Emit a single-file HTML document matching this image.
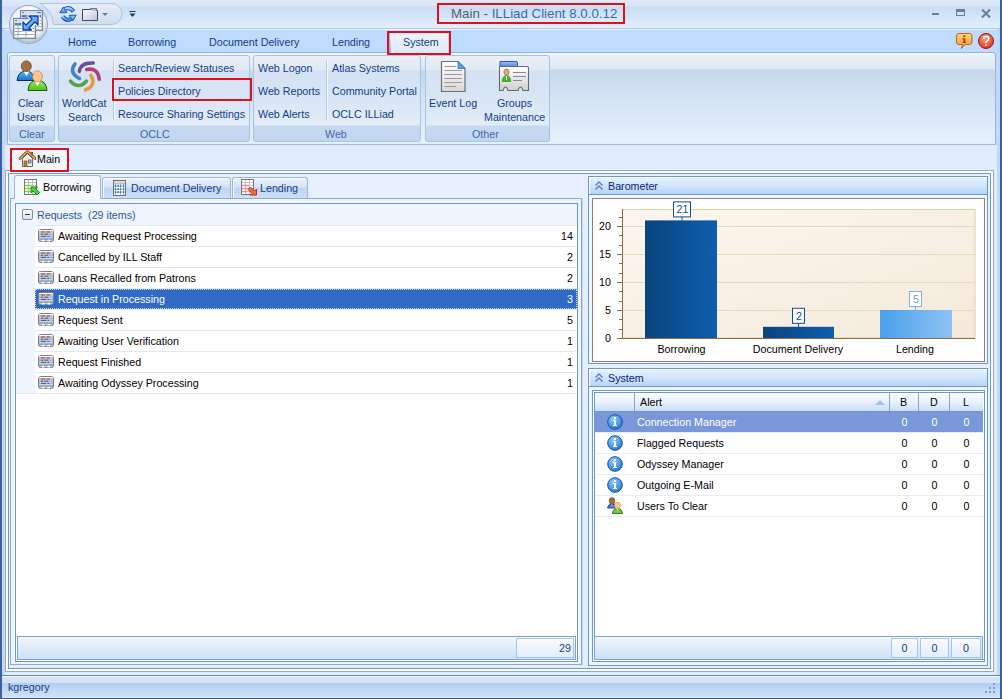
<!DOCTYPE html>
<html><head><meta charset="utf-8"><style>
*{box-sizing:border-box;margin:0;padding:0}
html,body{width:1002px;height:699px;overflow:hidden}
body{position:relative;font-family:"Liberation Sans",sans-serif;font-size:10.7px;color:#000;background:#c5d9f1}
.a{position:absolute}
.t{position:absolute;white-space:nowrap;line-height:13px}
.b{color:#123e87}
.gl{color:#3e6aaa}
.grp{border:1px solid #a9c3e3;border-radius:3px;background:linear-gradient(#e9f0f9 0px,#e0e9f5 14px,#d3e1f3 15px,#dae6f6 45px,#e3edf9 69px,#c5daf2 70px,#c1d7f0 85px)}
</style></head><body>
<div class="a" style="left:0px;top:0px;width:1002px;height:28px;background:linear-gradient(#e3e9f2 0px,#dde9f9 1px,#d7e5f8 6px,#c8dcf4 7px,#e2eefc 27px,#dcf5ff 28px)"></div>
<div class="a" style="left:0px;top:28px;width:1002px;height:1px;background:#a9c8f0"></div>
<div class="a" style="left:0px;top:29px;width:1002px;height:1px;background:#eef4fd"></div>
<div class="a" style="left:0px;top:30px;width:1002px;height:24px;background:#bfdbff"></div>
<div class="a" style="left:7px;top:52px;width:989px;height:93px;border:1px solid #8fb4e3;border-radius:3px;box-shadow:inset 0 1px 0 #f3f7fd;background:linear-gradient(#eef2f8 0px,#dfe7f2 16px,#c6d7eb 17px,#d4e2f3 45px,#e6f1fe 90px)"></div>
<div class="a" style="left:8px;top:143px;width:987px;height:1px;background:#d8efff"></div>
<div class="a" style="left:7px;top:144px;width:989px;height:1px;background:#a5bad6"></div>
<div class="a" style="left:2px;top:145px;width:998px;height:530px;background:#e0ecfc"></div>
<div class="a" style="left:0px;top:675px;width:1002px;height:1px;background:#5f88bf"></div>
<div class="a" style="left:0px;top:676px;width:1002px;height:22px;background:linear-gradient(#f2f7fe 0px,#f2f7fe 1px,#d6e4f7 1px,#d3e2f6 7px,#afcdf1 7px,#c2d8f4 14px,#cfe0f6 21px,#dfebfa 21px)"></div>
<div class="t b" style="left:8px;top:681px;">kgregory</div>
<div class="a" style="left:2px;top:29px;width:3px;height:646px;background:#c3d8f3"></div>
<div class="a" style="left:997px;top:29px;width:3px;height:646px;background:#c3d8f3"></div>
<div class="a" style="left:0px;top:0px;width:2px;height:699px;background:#3b619c"></div>
<div class="a" style="left:1000px;top:0px;width:2px;height:699px;background:#3b619c"></div>
<div class="a" style="left:0px;top:698px;width:1002px;height:1px;background:#34568a"></div>
<div class="t " style="left:451px;top:6px;font-size:13.3px;line-height:16px;color:#595f6b">Main - <span style="color:#3e6aaa">ILLiad Client 8.0.0.12</span></div>
<div class="a" style="left:437px;top:3px;width:188px;height:21px;border:2px solid #e0101a"></div>
<div class="a" style="left:932px;top:13px;width:7px;height:2px;background:#6b7c95"></div>
<div class="a" style="left:956px;top:9px;width:9px;height:7px;border:1px solid #6b7c95;border-top:3px solid #6b7c95"></div>
<svg class="a" style="left:981px;top:9px" width="10" height="9" viewBox="0 0 10 9"><path d="M1 0.5 L9 8.5 M9 0.5 L1 8.5" stroke="#6b7c95" stroke-width="2"/></svg>
<svg class="a" style="left:0px;top:0px" width="130" height="30" viewBox="0 0 130 30"><defs><linearGradient id="qg" x1="0" y1="0" x2="0" y2="1"><stop offset="0" stop-color="#e6eef9"/><stop offset="1" stop-color="#cfdcef"/></linearGradient></defs><path d="M40 3.5 H111.5 A10.5 10.5 0 0 1 111.5 24.5 H53.5 A26 26 0 0 0 40 3.5 Z" fill="url(#qg)" stroke="#aec3e0" stroke-width="1"/></svg>
<div class="a" style="left:10px;top:6px;width:37px;height:37px;border-radius:50%;background:radial-gradient(circle at 50% 35%,#ffffff 0,#f4f6f9 45%,#dde2e9 75%,#b9c2ce 100%);box-shadow:0 0 0 1px #9aa8bb,inset 0 -2px 3px rgba(120,135,155,0.45)"></div>
<div class="t b" style="left:68px;top:36px;">Home</div>
<div class="t b" style="left:128px;top:36px;">Borrowing</div>
<div class="t b" style="left:209px;top:36px;">Document Delivery</div>
<div class="t b" style="left:332px;top:36px;">Lending</div>
<div class="a" style="left:389px;top:33px;width:60px;height:21px;background:linear-gradient(#eef4fc,#dfe9f6);border-left:1px solid #9bb8de;border-right:1px solid #c2d5ee"></div>
<div class="a" style="left:390px;top:34px;width:1px;height:19px;background:linear-gradient(#e6fbff,#7fb0e6)"></div>
<div class="t b" style="left:403px;top:36px;">System</div>
<div class="a" style="left:387px;top:31px;width:64px;height:24px;border:2px solid #e0101a"></div>
<div class="a grp" style="left:9px;top:55px;width:46px;height:87px"></div>
<div class="a grp" style="left:58px;top:55px;width:192px;height:87px"></div>
<div class="a grp" style="left:253px;top:55px;width:168px;height:87px"></div>
<div class="a grp" style="left:425px;top:55px;width:125px;height:87px"></div>
<div class="a" style="left:113px;top:60px;width:2px;height:60px;border-left:1px solid #b7cbe5;border-right:1px solid #f4f8fd"></div>
<div class="a" style="left:326px;top:60px;width:2px;height:60px;border-left:1px solid #b7cbe5;border-right:1px solid #f4f8fd"></div>
<div class="t b" style="left:18px;top:97px;">Clear</div>
<div class="t b" style="left:17px;top:111px;">Users</div>
<div class="t gl" style="left:19px;top:128px;">Clear</div>
<div class="t b" style="left:62px;top:97px;">WorldCat</div>
<div class="t b" style="left:68px;top:111px;">Search</div>
<div class="t b" style="left:118px;top:62px;">Search/Review Statuses</div>
<div class="t b" style="left:118px;top:85px;">Policies Directory</div>
<div class="t b" style="left:118px;top:108px;">Resource Sharing Settings</div>
<div class="t gl" style="left:140px;top:128px;">OCLC</div>
<div class="a" style="left:112px;top:78px;width:140px;height:23px;border:2px solid #e0101a"></div>
<div class="t b" style="left:258px;top:62px;">Web Logon</div>
<div class="t b" style="left:258px;top:85px;">Web Reports</div>
<div class="t b" style="left:258px;top:108px;">Web Alerts</div>
<div class="t b" style="left:332px;top:62px;">Atlas Systems</div>
<div class="t b" style="left:332px;top:85px;">Community Portal</div>
<div class="t b" style="left:332px;top:108px;">OCLC ILLiad</div>
<div class="t gl" style="left:325px;top:128px;">Web</div>
<div class="t b" style="left:429px;top:97px;">Event Log</div>
<div class="t b" style="left:497px;top:97px;">Groups</div>
<div class="t b" style="left:484px;top:111px;">Maintenance</div>
<div class="t gl" style="left:472px;top:128px;">Other</div>
<div class="a" style="left:5px;top:170px;width:989px;height:502px;border:1px solid #98a9c8;background:#fff"></div>
<div class="a" style="left:8px;top:173px;width:983px;height:496px;border:1px solid #6d97cf;background:#e6f0fc"></div>
<div class="a" style="left:12px;top:150px;width:55px;height:21px;background:#f2f6fd"></div>
<div class="t " style="left:37px;top:153px;">Main</div>
<div class="a" style="left:10px;top:148px;width:59px;height:24px;border:2px solid #e0101a"></div>
<div class="a" style="left:10px;top:198px;width:572px;height:467px;border:1px solid #97a9ca;border-right-color:#8fa3c6;background:#eff5fd"></div>
<div class="a" style="left:582px;top:199px;width:1px;height:466px;background:#c9d6e9"></div>
<div class="a" style="left:15px;top:203px;width:563px;height:459px;border:1px solid #6d97cf;background:#fff"></div>
<div class="a" style="left:16px;top:204px;width:561px;height:190px;background:#f0f5fd"></div>
<div class="a" style="left:17px;top:393px;width:559px;height:1px;background:#dfe9f8"></div>
<div class="t " style="left:37px;top:209px;color:#2c5a9c">Requests&nbsp; (29 items)</div>
<div class="a" style="left:22px;top:209px;width:11px;height:11px;border:1px solid #7b8fab;border-radius:2px;background:linear-gradient(#fff,#d6e0ee)"></div>
<div class="a" style="left:25px;top:214px;width:5px;height:1px;background:#1e3d6b"></div>
<div class="a" style="left:35px;top:225px;width:542px;height:1px;background:#dfe9f8"></div>
<div class="a" style="left:35px;top:226px;width:542px;height:20px;background:#fff"></div>
<div class="t " style="left:58px;top:230px;color:#000">Awaiting Request Processing</div>
<svg class="a" style="left:38px;top:229px" width="16" height="14" viewBox="0 0 16 14"><rect x="0.5" y="0.5" width="15" height="12" rx="2" fill="#d6d6d6" stroke="#7c7c7c" stroke-width="1"/><rect x="1" y="1" width="14" height="1.2" fill="#fff"/><rect x="1" y="2.2" width="14" height="1.5" fill="#f4a0a0"/><rect x="1" y="3.7" width="14" height="0.8" fill="#d8d8d8"/><rect x="1" y="4.5" width="14" height="1.4" fill="#8fb3f0"/><rect x="1" y="5.9" width="14" height="0.8" fill="#d8d8d8"/><rect x="1" y="6.7" width="14" height="1.4" fill="#8fb3f0"/><rect x="1" y="8.1" width="14" height="0.8" fill="#d8d8d8"/><rect x="1" y="8.9" width="14" height="1.3" fill="#8fb3f0"/><path d="M3 3 H7 M8.5 3 H12 M3 5.2 H5 M6.5 5.2 H10 M3 7.4 H8 M9.5 7.4 H11" stroke="#505050" stroke-width="0.9"/><path d="M1 10.6 H15" stroke="#a0a0a0" stroke-width="1.2"/><path d="M4.5 12.8 V11.2 H6 V12.8 M10 12.8 V11.2 H11.5 V12.8" stroke="#fff" stroke-width="1" fill="none"/></svg>
<div class="t" style="left:35px;width:538px;top:230px;text-align:right;color:#000">14</div>
<div class="a" style="left:35px;top:246px;width:542px;height:1px;background:#dfe9f8"></div>
<div class="a" style="left:35px;top:247px;width:542px;height:20px;background:#fff"></div>
<div class="t " style="left:58px;top:251px;color:#000">Cancelled by ILL Staff</div>
<svg class="a" style="left:38px;top:250px" width="16" height="14" viewBox="0 0 16 14"><rect x="0.5" y="0.5" width="15" height="12" rx="2" fill="#d6d6d6" stroke="#7c7c7c" stroke-width="1"/><rect x="1" y="1" width="14" height="1.2" fill="#fff"/><rect x="1" y="2.2" width="14" height="1.5" fill="#f4a0a0"/><rect x="1" y="3.7" width="14" height="0.8" fill="#d8d8d8"/><rect x="1" y="4.5" width="14" height="1.4" fill="#8fb3f0"/><rect x="1" y="5.9" width="14" height="0.8" fill="#d8d8d8"/><rect x="1" y="6.7" width="14" height="1.4" fill="#8fb3f0"/><rect x="1" y="8.1" width="14" height="0.8" fill="#d8d8d8"/><rect x="1" y="8.9" width="14" height="1.3" fill="#8fb3f0"/><path d="M3 3 H7 M8.5 3 H12 M3 5.2 H5 M6.5 5.2 H10 M3 7.4 H8 M9.5 7.4 H11" stroke="#505050" stroke-width="0.9"/><path d="M1 10.6 H15" stroke="#a0a0a0" stroke-width="1.2"/><path d="M4.5 12.8 V11.2 H6 V12.8 M10 12.8 V11.2 H11.5 V12.8" stroke="#fff" stroke-width="1" fill="none"/></svg>
<div class="t" style="left:35px;width:538px;top:251px;text-align:right;color:#000">2</div>
<div class="a" style="left:35px;top:267px;width:542px;height:1px;background:#dfe9f8"></div>
<div class="a" style="left:35px;top:268px;width:542px;height:20px;background:#fff"></div>
<div class="t " style="left:58px;top:272px;color:#000">Loans Recalled from Patrons</div>
<svg class="a" style="left:38px;top:271px" width="16" height="14" viewBox="0 0 16 14"><rect x="0.5" y="0.5" width="15" height="12" rx="2" fill="#d6d6d6" stroke="#7c7c7c" stroke-width="1"/><rect x="1" y="1" width="14" height="1.2" fill="#fff"/><rect x="1" y="2.2" width="14" height="1.5" fill="#f4a0a0"/><rect x="1" y="3.7" width="14" height="0.8" fill="#d8d8d8"/><rect x="1" y="4.5" width="14" height="1.4" fill="#8fb3f0"/><rect x="1" y="5.9" width="14" height="0.8" fill="#d8d8d8"/><rect x="1" y="6.7" width="14" height="1.4" fill="#8fb3f0"/><rect x="1" y="8.1" width="14" height="0.8" fill="#d8d8d8"/><rect x="1" y="8.9" width="14" height="1.3" fill="#8fb3f0"/><path d="M3 3 H7 M8.5 3 H12 M3 5.2 H5 M6.5 5.2 H10 M3 7.4 H8 M9.5 7.4 H11" stroke="#505050" stroke-width="0.9"/><path d="M1 10.6 H15" stroke="#a0a0a0" stroke-width="1.2"/><path d="M4.5 12.8 V11.2 H6 V12.8 M10 12.8 V11.2 H11.5 V12.8" stroke="#fff" stroke-width="1" fill="none"/></svg>
<div class="t" style="left:35px;width:538px;top:272px;text-align:right;color:#000">2</div>
<div class="a" style="left:35px;top:288px;width:542px;height:1px;background:#dfe9f8"></div>
<div class="a" style="left:35px;top:289px;width:542px;height:20px;background:#316ac5"></div>
<div class="t " style="left:58px;top:293px;color:#fff">Request in Processing</div>
<svg class="a" style="left:38px;top:292px" width="16" height="14" viewBox="0 0 16 14"><rect x="0.5" y="0.5" width="15" height="12" rx="2" fill="#d6d6d6" stroke="#7c7c7c" stroke-width="1"/><rect x="1" y="1" width="14" height="1.2" fill="#fff"/><rect x="1" y="2.2" width="14" height="1.5" fill="#f4a0a0"/><rect x="1" y="3.7" width="14" height="0.8" fill="#d8d8d8"/><rect x="1" y="4.5" width="14" height="1.4" fill="#8fb3f0"/><rect x="1" y="5.9" width="14" height="0.8" fill="#d8d8d8"/><rect x="1" y="6.7" width="14" height="1.4" fill="#8fb3f0"/><rect x="1" y="8.1" width="14" height="0.8" fill="#d8d8d8"/><rect x="1" y="8.9" width="14" height="1.3" fill="#8fb3f0"/><path d="M3 3 H7 M8.5 3 H12 M3 5.2 H5 M6.5 5.2 H10 M3 7.4 H8 M9.5 7.4 H11" stroke="#505050" stroke-width="0.9"/><path d="M1 10.6 H15" stroke="#a0a0a0" stroke-width="1.2"/><path d="M4.5 12.8 V11.2 H6 V12.8 M10 12.8 V11.2 H11.5 V12.8" stroke="#fff" stroke-width="1" fill="none"/></svg>
<div class="t" style="left:35px;width:538px;top:293px;text-align:right;color:#fff">3</div>
<div class="a" style="left:35px;top:289px;width:542px;height:20px;border:1px dotted #c8d8f2"></div>
<div class="a" style="left:35px;top:309px;width:542px;height:1px;background:#dfe9f8"></div>
<div class="a" style="left:35px;top:310px;width:542px;height:20px;background:#fff"></div>
<div class="t " style="left:58px;top:314px;color:#000">Request Sent</div>
<svg class="a" style="left:38px;top:313px" width="16" height="14" viewBox="0 0 16 14"><rect x="0.5" y="0.5" width="15" height="12" rx="2" fill="#d6d6d6" stroke="#7c7c7c" stroke-width="1"/><rect x="1" y="1" width="14" height="1.2" fill="#fff"/><rect x="1" y="2.2" width="14" height="1.5" fill="#f4a0a0"/><rect x="1" y="3.7" width="14" height="0.8" fill="#d8d8d8"/><rect x="1" y="4.5" width="14" height="1.4" fill="#8fb3f0"/><rect x="1" y="5.9" width="14" height="0.8" fill="#d8d8d8"/><rect x="1" y="6.7" width="14" height="1.4" fill="#8fb3f0"/><rect x="1" y="8.1" width="14" height="0.8" fill="#d8d8d8"/><rect x="1" y="8.9" width="14" height="1.3" fill="#8fb3f0"/><path d="M3 3 H7 M8.5 3 H12 M3 5.2 H5 M6.5 5.2 H10 M3 7.4 H8 M9.5 7.4 H11" stroke="#505050" stroke-width="0.9"/><path d="M1 10.6 H15" stroke="#a0a0a0" stroke-width="1.2"/><path d="M4.5 12.8 V11.2 H6 V12.8 M10 12.8 V11.2 H11.5 V12.8" stroke="#fff" stroke-width="1" fill="none"/></svg>
<div class="t" style="left:35px;width:538px;top:314px;text-align:right;color:#000">5</div>
<div class="a" style="left:35px;top:330px;width:542px;height:1px;background:#dfe9f8"></div>
<div class="a" style="left:35px;top:331px;width:542px;height:20px;background:#fff"></div>
<div class="t " style="left:58px;top:335px;color:#000">Awaiting User Verification</div>
<svg class="a" style="left:38px;top:334px" width="16" height="14" viewBox="0 0 16 14"><rect x="0.5" y="0.5" width="15" height="12" rx="2" fill="#d6d6d6" stroke="#7c7c7c" stroke-width="1"/><rect x="1" y="1" width="14" height="1.2" fill="#fff"/><rect x="1" y="2.2" width="14" height="1.5" fill="#f4a0a0"/><rect x="1" y="3.7" width="14" height="0.8" fill="#d8d8d8"/><rect x="1" y="4.5" width="14" height="1.4" fill="#8fb3f0"/><rect x="1" y="5.9" width="14" height="0.8" fill="#d8d8d8"/><rect x="1" y="6.7" width="14" height="1.4" fill="#8fb3f0"/><rect x="1" y="8.1" width="14" height="0.8" fill="#d8d8d8"/><rect x="1" y="8.9" width="14" height="1.3" fill="#8fb3f0"/><path d="M3 3 H7 M8.5 3 H12 M3 5.2 H5 M6.5 5.2 H10 M3 7.4 H8 M9.5 7.4 H11" stroke="#505050" stroke-width="0.9"/><path d="M1 10.6 H15" stroke="#a0a0a0" stroke-width="1.2"/><path d="M4.5 12.8 V11.2 H6 V12.8 M10 12.8 V11.2 H11.5 V12.8" stroke="#fff" stroke-width="1" fill="none"/></svg>
<div class="t" style="left:35px;width:538px;top:335px;text-align:right;color:#000">1</div>
<div class="a" style="left:35px;top:351px;width:542px;height:1px;background:#dfe9f8"></div>
<div class="a" style="left:35px;top:352px;width:542px;height:20px;background:#fff"></div>
<div class="t " style="left:58px;top:356px;color:#000">Request Finished</div>
<svg class="a" style="left:38px;top:355px" width="16" height="14" viewBox="0 0 16 14"><rect x="0.5" y="0.5" width="15" height="12" rx="2" fill="#d6d6d6" stroke="#7c7c7c" stroke-width="1"/><rect x="1" y="1" width="14" height="1.2" fill="#fff"/><rect x="1" y="2.2" width="14" height="1.5" fill="#f4a0a0"/><rect x="1" y="3.7" width="14" height="0.8" fill="#d8d8d8"/><rect x="1" y="4.5" width="14" height="1.4" fill="#8fb3f0"/><rect x="1" y="5.9" width="14" height="0.8" fill="#d8d8d8"/><rect x="1" y="6.7" width="14" height="1.4" fill="#8fb3f0"/><rect x="1" y="8.1" width="14" height="0.8" fill="#d8d8d8"/><rect x="1" y="8.9" width="14" height="1.3" fill="#8fb3f0"/><path d="M3 3 H7 M8.5 3 H12 M3 5.2 H5 M6.5 5.2 H10 M3 7.4 H8 M9.5 7.4 H11" stroke="#505050" stroke-width="0.9"/><path d="M1 10.6 H15" stroke="#a0a0a0" stroke-width="1.2"/><path d="M4.5 12.8 V11.2 H6 V12.8 M10 12.8 V11.2 H11.5 V12.8" stroke="#fff" stroke-width="1" fill="none"/></svg>
<div class="t" style="left:35px;width:538px;top:356px;text-align:right;color:#000">1</div>
<div class="a" style="left:35px;top:372px;width:542px;height:1px;background:#dfe9f8"></div>
<div class="a" style="left:35px;top:373px;width:542px;height:20px;background:#fff"></div>
<div class="t " style="left:58px;top:377px;color:#000">Awaiting Odyssey Processing</div>
<svg class="a" style="left:38px;top:376px" width="16" height="14" viewBox="0 0 16 14"><rect x="0.5" y="0.5" width="15" height="12" rx="2" fill="#d6d6d6" stroke="#7c7c7c" stroke-width="1"/><rect x="1" y="1" width="14" height="1.2" fill="#fff"/><rect x="1" y="2.2" width="14" height="1.5" fill="#f4a0a0"/><rect x="1" y="3.7" width="14" height="0.8" fill="#d8d8d8"/><rect x="1" y="4.5" width="14" height="1.4" fill="#8fb3f0"/><rect x="1" y="5.9" width="14" height="0.8" fill="#d8d8d8"/><rect x="1" y="6.7" width="14" height="1.4" fill="#8fb3f0"/><rect x="1" y="8.1" width="14" height="0.8" fill="#d8d8d8"/><rect x="1" y="8.9" width="14" height="1.3" fill="#8fb3f0"/><path d="M3 3 H7 M8.5 3 H12 M3 5.2 H5 M6.5 5.2 H10 M3 7.4 H8 M9.5 7.4 H11" stroke="#505050" stroke-width="0.9"/><path d="M1 10.6 H15" stroke="#a0a0a0" stroke-width="1.2"/><path d="M4.5 12.8 V11.2 H6 V12.8 M10 12.8 V11.2 H11.5 V12.8" stroke="#fff" stroke-width="1" fill="none"/></svg>
<div class="t" style="left:35px;width:538px;top:377px;text-align:right;color:#000">1</div>
<div class="a" style="left:17px;top:636px;width:559px;height:24px;border:1px solid #7ea3d6;background:linear-gradient(#f4f8fe 0,#dde9fa 60%,#cfe0f7 100%)"></div>
<div class="a" style="left:516px;top:638px;width:58px;height:20px;border:1px solid #a9c4e8;background:linear-gradient(#f9fbff,#e3edfb)"></div>
<div class="t b" style="left:520px;width:51px;top:642px;text-align:right">29</div>
<div class="a" style="left:14px;top:175px;width:87px;height:24px;border:1px solid #9fb6d8;border-bottom:none;border-radius:3px 3px 0 0;background:#f4f8fd"></div>
<div class="t " style="left:43px;top:181px;">Borrowing</div>
<div class="a" style="left:102px;top:177px;width:129px;height:21px;border:1px solid #9fb6d8;border-bottom:none;border-radius:3px 3px 0 0;box-shadow:inset 1px 1px 0 #f6faff;background:linear-gradient(#e9f1fc 0,#d6e5f7 45%,#bed6f3 50%,#cde0f6 100%)"></div>
<div class="t b" style="left:131px;top:182px;">Document Delivery</div>
<div class="a" style="left:232px;top:177px;width:76px;height:21px;border:1px solid #9fb6d8;border-bottom:none;border-radius:3px 3px 0 0;box-shadow:inset 1px 1px 0 #f6faff;background:linear-gradient(#e9f1fc 0,#d6e5f7 45%,#bed6f3 50%,#cde0f6 100%)"></div>
<div class="t b" style="left:260px;top:182px;">Lending</div>
<div class="a" style="left:588px;top:176px;width:400px;height:188px;border:1px solid #6d97cf;background:#f0f6fe"></div>
<div class="a" style="left:589px;top:177px;width:398px;height:17px;border-top:1px solid #fff;border-left:1px solid #fff;background:linear-gradient(#e9f2ff,#b8d4f9)"></div>
<div class="a" style="left:589px;top:194px;width:398px;height:1px;background:#6d97cf"></div>
<div class="t " style="left:608px;top:180px;color:#0c2277">Barometer</div>
<div class="a" style="left:592px;top:198px;width:393px;height:164px;border:1px solid #9a7d6b;background:#fff"></div>
<svg class="a" style="left:592px;top:198px" width="393" height="164" viewBox="0 0 393 164"><defs><linearGradient id="pl" x1="0" y1="0" x2="1" y2="1"><stop offset="0" stop-color="#fbf6ee"/><stop offset="1" stop-color="#f4eadb"/></linearGradient><linearGradient id="bd" x1="0" y1="0" x2="1" y2="0"><stop offset="0" stop-color="#0b447e"/><stop offset="1" stop-color="#0d5eac"/></linearGradient><linearGradient id="bl" x1="0" y1="0" x2="1" y2="0"><stop offset="0" stop-color="#4aa0ec"/><stop offset="1" stop-color="#8dc3f4"/></linearGradient></defs><rect x="30.5" y="11.5" width="352.5" height="128.5" fill="url(#pl)" stroke="#e0cfa8" stroke-width="1"/><line x1="31" x2="383" y1="112.5" y2="112.5" stroke="#e6d9bc" stroke-width="1"/><line x1="31" x2="383" y1="84.5" y2="84.5" stroke="#e6d9bc" stroke-width="1"/><line x1="31" x2="383" y1="56.5" y2="56.5" stroke="#e6d9bc" stroke-width="1"/><line x1="31" x2="383" y1="28.5" y2="28.5" stroke="#e6d9bc" stroke-width="1"/><line x1="30.5" x2="30.5" y1="11" y2="141" stroke="#8c6d3f" stroke-width="1"/><line x1="25" x2="383" y1="140.5" y2="140.5" stroke="#8c6d3f" stroke-width="1"/><line x1="25" x2="30" y1="140.5" y2="140.5" stroke="#8c6d3f" stroke-width="1"/><line x1="27" x2="30" y1="131.5" y2="131.5" stroke="#8c6d3f" stroke-width="1"/><line x1="27" x2="30" y1="121.5" y2="121.5" stroke="#8c6d3f" stroke-width="1"/><line x1="25" x2="30" y1="112.5" y2="112.5" stroke="#8c6d3f" stroke-width="1"/><line x1="27" x2="30" y1="103.5" y2="103.5" stroke="#8c6d3f" stroke-width="1"/><line x1="27" x2="30" y1="93.5" y2="93.5" stroke="#8c6d3f" stroke-width="1"/><line x1="25" x2="30" y1="84.5" y2="84.5" stroke="#8c6d3f" stroke-width="1"/><line x1="27" x2="30" y1="75.5" y2="75.5" stroke="#8c6d3f" stroke-width="1"/><line x1="27" x2="30" y1="65.5" y2="65.5" stroke="#8c6d3f" stroke-width="1"/><line x1="25" x2="30" y1="56.5" y2="56.5" stroke="#8c6d3f" stroke-width="1"/><line x1="27" x2="30" y1="47.5" y2="47.5" stroke="#8c6d3f" stroke-width="1"/><line x1="27" x2="30" y1="37.5" y2="37.5" stroke="#8c6d3f" stroke-width="1"/><line x1="25" x2="30" y1="28.5" y2="28.5" stroke="#8c6d3f" stroke-width="1"/><line x1="27" x2="30" y1="19.5" y2="19.5" stroke="#8c6d3f" stroke-width="1"/><text x="19" y="144.0" text-anchor="end" font-family="Liberation Sans" font-size="10.7" fill="#000">0</text><text x="19" y="116.0" text-anchor="end" font-family="Liberation Sans" font-size="10.7" fill="#000">5</text><text x="19" y="88.0" text-anchor="end" font-family="Liberation Sans" font-size="10.7" fill="#000">10</text><text x="19" y="60.0" text-anchor="end" font-family="Liberation Sans" font-size="10.7" fill="#000">15</text><text x="19" y="32.0" text-anchor="end" font-family="Liberation Sans" font-size="10.7" fill="#000">20</text><rect x="53" y="22.400000000000006" width="72" height="117.6" fill="url(#bd)"/><line x1="90.0" x2="90.0" y1="18.400000000000006" y2="22.400000000000006" stroke="#0d4f93" stroke-width="1"/><rect x="81.5" y="3.9000000000000057" width="17" height="15" fill="#fff" stroke="#0d4f93" stroke-width="1"/><text x="90.5" y="15.400000000000006" text-anchor="middle" font-family="Liberation Sans" font-size="10.7" fill="#0d4f93">21</text><text x="89.5" y="155" text-anchor="middle" font-family="Liberation Sans" font-size="10.7" fill="#000">Borrowing</text><rect x="171" y="128.8" width="71" height="11.199999999999989" fill="url(#bd)"/><line x1="206.5" x2="206.5" y1="124.80000000000001" y2="128.8" stroke="#0d4f93" stroke-width="1"/><rect x="200.5" y="110.30000000000001" width="12" height="15" fill="#fff" stroke="#0d4f93" stroke-width="1"/><text x="207.0" y="121.80000000000001" text-anchor="middle" font-family="Liberation Sans" font-size="10.7" fill="#0d4f93">2</text><text x="206.0" y="155" text-anchor="middle" font-family="Liberation Sans" font-size="10.7" fill="#000">Document Delivery</text><rect x="288" y="112.0" width="72" height="28.0" fill="url(#bl)"/><line x1="323.5" x2="323.5" y1="108.0" y2="112.0" stroke="#7fb1e8" stroke-width="1"/><rect x="317.5" y="93.5" width="12" height="15" fill="#fff" stroke="#7fb1e8" stroke-width="1"/><text x="324.0" y="105.0" text-anchor="middle" font-family="Liberation Sans" font-size="10.7" fill="#5d9ee6">5</text><text x="323.0" y="155" text-anchor="middle" font-family="Liberation Sans" font-size="10.7" fill="#000">Lending</text></svg>
<div class="a" style="left:588px;top:368px;width:400px;height:298px;border:1px solid #6d97cf;background:#f0f6fe"></div>
<div class="a" style="left:589px;top:369px;width:398px;height:17px;border-top:1px solid #fff;border-left:1px solid #fff;background:linear-gradient(#e9f2ff,#b8d4f9)"></div>
<div class="a" style="left:589px;top:386px;width:398px;height:1px;background:#6d97cf"></div>
<div class="t " style="left:608px;top:372px;color:#0c2277">System</div>
<div class="a" style="left:592px;top:390px;width:393px;height:272px;border:1px solid #6d97cf;background:#fff"></div>
<div class="a" style="left:594px;top:392px;width:390px;height:268px;border:1px solid #6d97cf;border-right:none;background:#fff"></div>
<div class="a" style="left:595px;top:393px;width:388px;height:19px;background:linear-gradient(#fbfdff 0,#e9f2fd 50%,#c9ddf7 100%);border-bottom:1px solid #6d97cf"></div>
<div class="a" style="left:634px;top:393px;width:1px;height:18px;background:#7fa5d8"></div>
<div class="a" style="left:889px;top:393px;width:1px;height:18px;background:#7fa5d8"></div>
<div class="a" style="left:918px;top:393px;width:1px;height:18px;background:#7fa5d8"></div>
<div class="a" style="left:949px;top:393px;width:1px;height:18px;background:#7fa5d8"></div>
<div class="t " style="left:640px;top:396px;">Alert</div>
<div class="t " style="left:900px;top:396px;">B</div>
<div class="t " style="left:930px;top:396px;">D</div>
<div class="t " style="left:963px;top:396px;">L</div>
<svg class="a" style="left:875px;top:400px" width="10" height="5" viewBox="0 0 10 5"><path d="M0 5 L5 0 L10 5Z" fill="#9ec3f5"/></svg>
<div class="a" style="left:595px;top:412px;width:388px;height:20px;background:#7a97d9"></div>
<div class="a" style="left:595px;top:432px;width:388px;height:1px;background:#e5edf8"></div>
<div class="t " style="left:637px;top:416px;color:#fff">Connection Manager</div>
<svg class="a" style="left:607px;top:414px" width="16" height="16" viewBox="0 0 16 16"><defs><radialGradient id="ifg" cx="0.4" cy="0.3" r="0.8"><stop offset="0" stop-color="#8fd0ff"/><stop offset="1" stop-color="#1c6fd0"/></radialGradient></defs><circle cx="8" cy="8" r="7.3" fill="url(#ifg)" stroke="#1b4ea0" stroke-width="1"/><rect x="7" y="3" width="2" height="2" fill="#fff"/><path d="M6 6 H9 V11 H10 V12 H6 V11 H7 V7 H6Z" fill="#fff"/></svg>
<div class="t" style="left:894.5px;width:20px;top:416px;text-align:center;color:#fff">0</div>
<div class="t" style="left:924.5px;width:20px;top:416px;text-align:center;color:#fff">0</div>
<div class="t" style="left:956.5px;width:20px;top:416px;text-align:center;color:#fff">0</div>
<div class="a" style="left:595px;top:453px;width:388px;height:1px;background:#e5edf8"></div>
<div class="t " style="left:637px;top:437px;color:#000">Flagged Requests</div>
<svg class="a" style="left:607px;top:435px" width="16" height="16" viewBox="0 0 16 16"><defs><radialGradient id="ifg" cx="0.4" cy="0.3" r="0.8"><stop offset="0" stop-color="#8fd0ff"/><stop offset="1" stop-color="#1c6fd0"/></radialGradient></defs><circle cx="8" cy="8" r="7.3" fill="url(#ifg)" stroke="#1b4ea0" stroke-width="1"/><rect x="7" y="3" width="2" height="2" fill="#fff"/><path d="M6 6 H9 V11 H10 V12 H6 V11 H7 V7 H6Z" fill="#fff"/></svg>
<div class="t" style="left:894.5px;width:20px;top:437px;text-align:center;color:#000">0</div>
<div class="t" style="left:924.5px;width:20px;top:437px;text-align:center;color:#000">0</div>
<div class="t" style="left:956.5px;width:20px;top:437px;text-align:center;color:#000">0</div>
<div class="a" style="left:595px;top:474px;width:388px;height:1px;background:#e5edf8"></div>
<div class="t " style="left:637px;top:458px;color:#000">Odyssey Manager</div>
<svg class="a" style="left:607px;top:456px" width="16" height="16" viewBox="0 0 16 16"><defs><radialGradient id="ifg" cx="0.4" cy="0.3" r="0.8"><stop offset="0" stop-color="#8fd0ff"/><stop offset="1" stop-color="#1c6fd0"/></radialGradient></defs><circle cx="8" cy="8" r="7.3" fill="url(#ifg)" stroke="#1b4ea0" stroke-width="1"/><rect x="7" y="3" width="2" height="2" fill="#fff"/><path d="M6 6 H9 V11 H10 V12 H6 V11 H7 V7 H6Z" fill="#fff"/></svg>
<div class="t" style="left:894.5px;width:20px;top:458px;text-align:center;color:#000">0</div>
<div class="t" style="left:924.5px;width:20px;top:458px;text-align:center;color:#000">0</div>
<div class="t" style="left:956.5px;width:20px;top:458px;text-align:center;color:#000">0</div>
<div class="a" style="left:595px;top:495px;width:388px;height:1px;background:#e5edf8"></div>
<div class="t " style="left:637px;top:479px;color:#000">Outgoing E-Mail</div>
<svg class="a" style="left:607px;top:477px" width="16" height="16" viewBox="0 0 16 16"><defs><radialGradient id="ifg" cx="0.4" cy="0.3" r="0.8"><stop offset="0" stop-color="#8fd0ff"/><stop offset="1" stop-color="#1c6fd0"/></radialGradient></defs><circle cx="8" cy="8" r="7.3" fill="url(#ifg)" stroke="#1b4ea0" stroke-width="1"/><rect x="7" y="3" width="2" height="2" fill="#fff"/><path d="M6 6 H9 V11 H10 V12 H6 V11 H7 V7 H6Z" fill="#fff"/></svg>
<div class="t" style="left:894.5px;width:20px;top:479px;text-align:center;color:#000">0</div>
<div class="t" style="left:924.5px;width:20px;top:479px;text-align:center;color:#000">0</div>
<div class="t" style="left:956.5px;width:20px;top:479px;text-align:center;color:#000">0</div>
<div class="a" style="left:595px;top:516px;width:388px;height:1px;background:#e5edf8"></div>
<div class="t " style="left:637px;top:500px;color:#000">Users To Clear</div>
<svg class="a" style="left:607px;top:497px" width="16" height="17" viewBox="0 0 16 17"><path d="M0.5 11 Q1 7 5 7 Q9 7 9.5 11Z" fill="#3a8ee0" stroke="#0a2a6e" stroke-width="0.8"/><path d="M4 7.2 L5 9 L6 7.2Z" fill="#fff"/><ellipse cx="5" cy="4" rx="2.9" ry="3.4" fill="#9a6a3a" stroke="#6e4218" stroke-width="0.5"/><path d="M5.5 16.5 Q6 11.5 10.5 11.5 Q15 11.5 15.5 16.5Z" fill="#6ad03a" stroke="#1d5a0a" stroke-width="0.8"/><path d="M9.5 11.7 L10.5 13.5 L11.5 11.7Z" fill="#fff"/><ellipse cx="10.5" cy="8.5" rx="2.9" ry="3.4" fill="#ffc48f" stroke="#c98a3a" stroke-width="0.5"/></svg>
<div class="t" style="left:894.5px;width:20px;top:500px;text-align:center;color:#000">0</div>
<div class="t" style="left:924.5px;width:20px;top:500px;text-align:center;color:#000">0</div>
<div class="t" style="left:956.5px;width:20px;top:500px;text-align:center;color:#000">0</div>
<div class="a" style="left:594px;top:636px;width:389px;height:24px;border:1px solid #7ea3d6;background:linear-gradient(#f4f8fe 0,#dde9fa 60%,#cfe0f7 100%)"></div>
<div class="a" style="left:891px;top:638px;width:27px;height:20px;border:1px solid #a9c4e8;background:linear-gradient(#f9fbff,#e3edfb)"></div>
<div class="t b" style="left:891px;width:27px;top:642px;text-align:center">0</div>
<div class="a" style="left:920px;top:638px;width:29px;height:20px;border:1px solid #a9c4e8;background:linear-gradient(#f9fbff,#e3edfb)"></div>
<div class="t b" style="left:920px;width:29px;top:642px;text-align:center">0</div>
<div class="a" style="left:951px;top:638px;width:30px;height:20px;border:1px solid #a9c4e8;background:linear-gradient(#f9fbff,#e3edfb)"></div>
<div class="t b" style="left:951px;width:30px;top:642px;text-align:center">0</div>
<svg class="a" style="left:13px;top:10px" width="32" height="30" viewBox="0 0 32 30"><rect x="7.5" y="0.5" width="22" height="20" fill="#d3dae4" stroke="#7b8796" stroke-width="1.2"/><rect x="8" y="1" width="21" height="3" fill="#d7dcf7"/><path d="M9 2.5 H11 M24 2.5 H28" stroke="#555" stroke-width="0.8"/><rect x="9" y="5" width="19" height="14" fill="#fff"/><rect x="9" y="5" width="19" height="2.5" fill="#3f7fd0"/><path d="M9 10.5h19M9 13.5h19M9 16.5h19M13 5v14" stroke="#a0a6ae" stroke-width="1"/><rect x="0.5" y="8.5" width="22" height="20" fill="#d3dae4" stroke="#7b8796" stroke-width="1.2"/><rect x="1" y="9" width="21" height="3" fill="#d7dcf7"/><path d="M2 10.5 H4" stroke="#555" stroke-width="0.8"/><rect x="2" y="13" width="19" height="14" fill="#fff"/><rect x="2" y="13" width="19" height="2.5" fill="#3f7fd0"/><path d="M2 18.5h19M2 21.5h19M2 24.5h19M5 13v14M13 21v6" stroke="#a0a6ae" stroke-width="1"/><defs><linearGradient id="ag" x1="0" y1="0" x2="1" y2="1"><stop offset="0" stop-color="#9fd2ff"/><stop offset="1" stop-color="#2f86e0"/></linearGradient></defs><path d="M10 20 L10 12 L13 15 L19 9 L16 6 L25 6 L25 15 L22 12 L16 18 L18.5 20 Z" fill="none" stroke="#fff" stroke-width="3.2" stroke-linejoin="round"/><path d="M10 20 L10 12 L13 15 L19 9 L16 6 L25 6 L25 15 L22 12 L16 18 L18.5 20 Z" fill="url(#ag)" stroke="#0a3aa8" stroke-width="1.3" stroke-linejoin="round"/></svg>
<svg class="a" style="left:59px;top:5px" width="18" height="18" viewBox="0 0 18 18"><defs><linearGradient id="rg" x1="0" y1="0" x2="0" y2="1"><stop offset="0" stop-color="#a8d4ff"/><stop offset="1" stop-color="#3b8de8"/></linearGradient></defs><path d="M14.5 6.5 Q10.5 1 5 4.5" fill="none" stroke="#1a55c0" stroke-width="4"/><path d="M14.5 6.5 Q10.5 1 5 4.5" fill="none" stroke="url(#rg)" stroke-width="2"/><path d="M0.8 7.8 L7.8 7.6 L4.2 2.2 Z" fill="url(#rg)" stroke="#1a55c0" stroke-width="1" stroke-linejoin="round"/><path d="M3.5 11.5 Q7.5 17 13 13.5" fill="none" stroke="#1a55c0" stroke-width="4"/><path d="M3.5 11.5 Q7.5 17 13 13.5" fill="none" stroke="url(#rg)" stroke-width="2"/><path d="M17.2 10.2 L10.2 10.4 L13.8 15.8 Z" fill="url(#rg)" stroke="#1a55c0" stroke-width="1" stroke-linejoin="round"/></svg>
<svg class="a" style="left:82px;top:7px" width="17" height="15" viewBox="0 0 17 15"><defs><linearGradient id="fg" x1="0" y1="0" x2="1" y2="1"><stop offset="0" stop-color="#ffffff"/><stop offset="1" stop-color="#b9c7dc"/></linearGradient></defs><path d="M0.5 2.5 H8.5 V1.5 H14.5 V3.5 H15.5 V13.5 H0.5 Z" fill="url(#fg)" stroke="#3f4a5a" stroke-width="1"/><rect x="9" y="1.5" width="5.5" height="2" fill="#a9b0b8"/></svg>
<svg class="a" style="left:102px;top:13px" width="6" height="4" viewBox="0 0 6 4"><path d="M0 0 H6 L3 3Z" fill="#5b82b8"/></svg>
<svg class="a" style="left:129px;top:10px" width="7" height="9" viewBox="0 0 7 9"><rect x="0.5" y="1" width="6" height="1" fill="#1f3a70"/><path d="M0.5 3.5 H6.5 L3.5 7Z" fill="#1f3a70"/></svg>
<svg class="a" style="left:956px;top:33px" width="17" height="17" viewBox="0 0 17 17"><defs><linearGradient id="ig" x1="0" y1="0" x2="0" y2="1"><stop offset="0" stop-color="#ffd77a"/><stop offset="1" stop-color="#f39a2a"/></linearGradient></defs><path d="M3 0.5 H13.5 Q16 0.5 16 3 V9 Q16 11.5 13.5 11.5 H9 L5.5 15.5 L6.5 11.5 H3 Q0.5 11.5 0.5 9 V3 Q0.5 0.5 3 0.5Z" fill="url(#ig)" stroke="#c0611a" stroke-width="1"/><rect x="7.3" y="2.2" width="2" height="2" fill="#b33a16"/><path d="M6.3 5.3 H9.3 V9 H10.3 V10 H6.3 V9 H7.3 V6.3 H6.3Z" fill="#b33a16"/></svg>
<svg class="a" style="left:978px;top:33px" width="16" height="16" viewBox="0 0 16 16"><defs><radialGradient id="hg" cx="0.45" cy="0.35" r="0.7"><stop offset="0" stop-color="#ff9b7a"/><stop offset="1" stop-color="#d8301a"/></radialGradient></defs><circle cx="8" cy="8" r="7.5" fill="url(#hg)" stroke="#a3120b" stroke-width="1"/><path d="M5.5 6 Q5.5 3.3 8 3.3 Q10.7 3.3 10.7 5.8 Q10.7 7.3 8.8 8.2 Q8 8.6 8 10" stroke="#fff" stroke-width="1.6" fill="none"/><rect x="7.2" y="11.2" width="1.7" height="1.7" fill="#fff"/></svg>
<svg class="a" style="left:16px;top:60px" width="32" height="32" viewBox="0 0 32 32"><defs><linearGradient id="ub" x1="0" y1="0" x2="0" y2="1"><stop offset="0" stop-color="#59b4f0"/><stop offset="1" stop-color="#1b72cc"/></linearGradient><linearGradient id="ugr" x1="0" y1="0" x2="0" y2="1"><stop offset="0" stop-color="#9be06a"/><stop offset="1" stop-color="#4fc41c"/></linearGradient></defs><path d="M1 20.5 Q2 11 10.5 11 Q17.5 11 18 20.5 Z" fill="url(#ub)" stroke="#0a2a6e" stroke-width="1"/><path d="M7.5 11.2 L10.5 16 L13.5 11.2Z" fill="#fff"/><ellipse cx="10.3" cy="6.2" rx="5" ry="5.3" fill="#a0703f" stroke="#6e4218" stroke-width="0.8"/><path d="M12 30.5 Q12.5 20.5 21.5 20.5 Q30.5 20.5 31 30.5 Z" fill="url(#ugr)" stroke="#1d5a0a" stroke-width="1"/><path d="M18.5 20.7 L21.5 26 L24.5 20.7Z" fill="#fff"/><ellipse cx="21.5" cy="16.5" rx="4.9" ry="5.6" fill="#ffc48f" stroke="#c98a3a" stroke-width="0.8"/></svg>
<svg class="a" style="left:64px;top:56px" width="40" height="40" viewBox="0 0 40 40"><g fill="none" stroke-width="3.6" stroke-linecap="round"><path d="M11 8 Q4.4 16.8 15.5 22.5" stroke="#3a86c9"/><path d="M15.4 15.2 Q16.7 6.5 29.2 7" stroke="#6b4c9e"/><path d="M22.6 13.4 Q34.1 11.3 35.2 23.2" stroke="#b23d7d"/><path d="M26.9 19.5 Q32.8 29.4 21.5 33.8" stroke="#e99a3b"/><path d="M22.3 25.2 Q14.5 33.8 6.6 25.2" stroke="#4fa34a"/></g></svg>
<svg class="a" style="left:440px;top:60px" width="27" height="33" viewBox="0 0 27 33"><defs><linearGradient id="dg" x1="0" y1="0" x2="0" y2="1"><stop offset="0" stop-color="#ffffff"/><stop offset="1" stop-color="#d8d8d8"/></linearGradient></defs><path d="M1.5 1.5 H18 L25 8.5 V31.5 H1.5 Z" fill="url(#dg)" stroke="#6e6e6e" stroke-width="1.2"/><path d="M18 1.5 L25 8.5 H18 Z" fill="#5aa0e8" stroke="#2f74c8" stroke-width="0.8"/><path d="M4.5 6.5 H16 M4.5 10.5 H22 M4.5 14.5 H22 M4.5 18.5 H22 M4.5 22.5 H22 M4.5 26.5 H16" stroke="#9a9a9a" stroke-width="1.2"/></svg>
<svg class="a" style="left:498px;top:60px" width="32" height="32" viewBox="0 0 32 32"><defs><linearGradient id="cg" x1="0" y1="0" x2="0" y2="1"><stop offset="0" stop-color="#ffffff"/><stop offset="1" stop-color="#d0d0d0"/></linearGradient><linearGradient id="tg" x1="0" y1="0" x2="0" y2="1"><stop offset="0" stop-color="#9cc4fa"/><stop offset="1" stop-color="#4d86e6"/></linearGradient></defs><path d="M2 1.5 H18 Q19.5 1.5 19.5 3 V6.5 H2 Z" fill="url(#tg)" stroke="#3a4fb8" stroke-width="1"/><path d="M1.5 6.5 H29 Q30.5 6.5 30.5 8 V30.5 H25 Q24 27 22.5 27 Q21 27 20 30.5 H10 Q9 27 7.5 27 Q6 27 5 30.5 H1.5 Z" fill="url(#cg)" stroke="#6a6a6a" stroke-width="1.1"/><ellipse cx="8.5" cy="12" rx="2.6" ry="3" fill="#e6a876" stroke="#8a5a3a" stroke-width="0.6"/><path d="M4.3 21.5 Q4.5 15.5 8.5 15.5 Q12.5 15.5 12.7 21.5Z" fill="#43b82c" stroke="#2a7a1a" stroke-width="0.6"/><rect x="8" y="16" width="1" height="4" fill="#fff"/><path d="M15 12.5 H28 M15 16.5 H28 M15 20.5 H24" stroke="#8a8a8a" stroke-width="1.2"/></svg>
<svg class="a" style="left:18px;top:150px" width="18" height="18" viewBox="0 0 18 18"><rect x="13.2" y="2" width="1.8" height="5" fill="#c01818"/><path d="M4.5 8.5 V16.5 H14.5 V8.5 L9.5 3.5 Z" fill="#ececec" stroke="#6a6a6a" stroke-width="1"/><path d="M2 8.6 L9.5 1.6 L17 8.6" fill="none" stroke="#7a4a1a" stroke-width="2.8" stroke-linecap="round" stroke-linejoin="round"/><path d="M2 8.6 L9.5 1.6 L17 8.6" fill="none" stroke="#ebb880" stroke-width="1.2" stroke-linecap="round" stroke-linejoin="round"/><rect x="6" y="11" width="3" height="5.5" fill="#c27a30" stroke="#7a4a1a" stroke-width="0.6"/><rect x="10.5" y="10" width="2.5" height="3" fill="#8fc2f0" stroke="#555" stroke-width="0.7"/></svg>
<svg class="a" style="left:24px;top:179px" width="17" height="17" viewBox="0 0 17 17"><rect x="0.5" y="0.5" width="12" height="15" fill="#fff" stroke="#777" stroke-width="1"/><path d="M1 3.5 H12 M1 6.5 H12 M1 9.5 H12 M1 12.5 H12 M4.5 1 V15 M8.5 1 V15" stroke="#bdbdbd" stroke-width="1"/><path d="M1 6.5 H8 M1 9.5 H6 M1 12.5 H6" stroke="#8ccf3a" stroke-width="1.5"/><path d="M7 8 L7 14 L9 12 L13 16 L15.5 13.5 L11.5 9.5 L13.5 8 Z" fill="#4fcf3a" stroke="#1f8a1a" stroke-width="1"/></svg>
<svg class="a" style="left:113px;top:180px" width="13" height="16" viewBox="0 0 13 16"><rect x="0.5" y="0.5" width="12" height="15" fill="#fff" stroke="#6e6e6e" stroke-width="1"/><rect x="1" y="1" width="11" height="2.5" fill="#dcdcdc"/><rect x="1" y="3.5" width="11" height="0.8" fill="#9a9a9a"/><rect x="1" y="5.3" width="11" height="1.6" fill="#a9cdf5"/><rect x="1" y="8.3" width="11" height="1.6" fill="#a9cdf5"/><rect x="1" y="11.3" width="11" height="1.6" fill="#a9cdf5"/><path d="M2.5 3.5 V15 M7.5 3.5 V15 M10.5 3.5 V15" stroke="#8aa6c8" stroke-width="0.8"/><path d="M2.5 5.3 V7 M7.5 5.3 V7 M10.5 5.3 V7 M2.5 8.3 V10 M7.5 8.3 V10 M10.5 8.3 V10 M2.5 11.3 V13 M7.5 11.3 V13 M10.5 11.3 V13" stroke="#3a70b8" stroke-width="1"/><path d="M4.3 6.1 H5.8 M4.3 9.1 H5.8 M4.3 12.1 H5.8" stroke="#2a4a80" stroke-width="1.2"/></svg>
<svg class="a" style="left:241px;top:179px" width="18" height="18" viewBox="0 0 18 18"><rect x="0.5" y="0.5" width="12" height="15" fill="#fff" stroke="#777" stroke-width="1"/><path d="M1 3.5 H12 M1 6.5 H12 M1 9.5 H12 M1 12.5 H12 M4.5 1 V15 M8.5 1 V15" stroke="#c6c6c6" stroke-width="1"/><path d="M1 6.5 H8 M1 9.5 H6 M1 12.5 H6" stroke="#f08a8a" stroke-width="1.5"/><path d="M15.5 16 L15.5 10 L13.5 12 L9.5 8 L7 10.5 L11 14.5 L9 16 Z" fill="#f06a3a" stroke="#b8301a" stroke-width="1"/></svg>
<svg class="a" style="left:595px;top:181px" width="8" height="9" viewBox="0 0 8 9"><path d="M0.5 4.5 L4 1 L7.5 4.5 M0.5 8.5 L4 5 L7.5 8.5" fill="none" stroke="#5b7fb0" stroke-width="1.3"/></svg>
<svg class="a" style="left:595px;top:373px" width="8" height="9" viewBox="0 0 8 9"><path d="M0.5 4.5 L4 1 L7.5 4.5 M0.5 8.5 L4 5 L7.5 8.5" fill="none" stroke="#5b7fb0" stroke-width="1.3"/></svg>
<svg class="a" style="left:983px;top:681px" width="14" height="14" viewBox="0 0 14 14"><rect x="10" y="2" width="2" height="2" fill="#7d9fd0"/><rect x="10" y="6" width="2" height="2" fill="#7d9fd0"/><rect x="6" y="6" width="2" height="2" fill="#7d9fd0"/><rect x="10" y="10" width="2" height="2" fill="#7d9fd0"/><rect x="6" y="10" width="2" height="2" fill="#7d9fd0"/><rect x="2" y="10" width="2" height="2" fill="#7d9fd0"/></svg>
</body></html>
